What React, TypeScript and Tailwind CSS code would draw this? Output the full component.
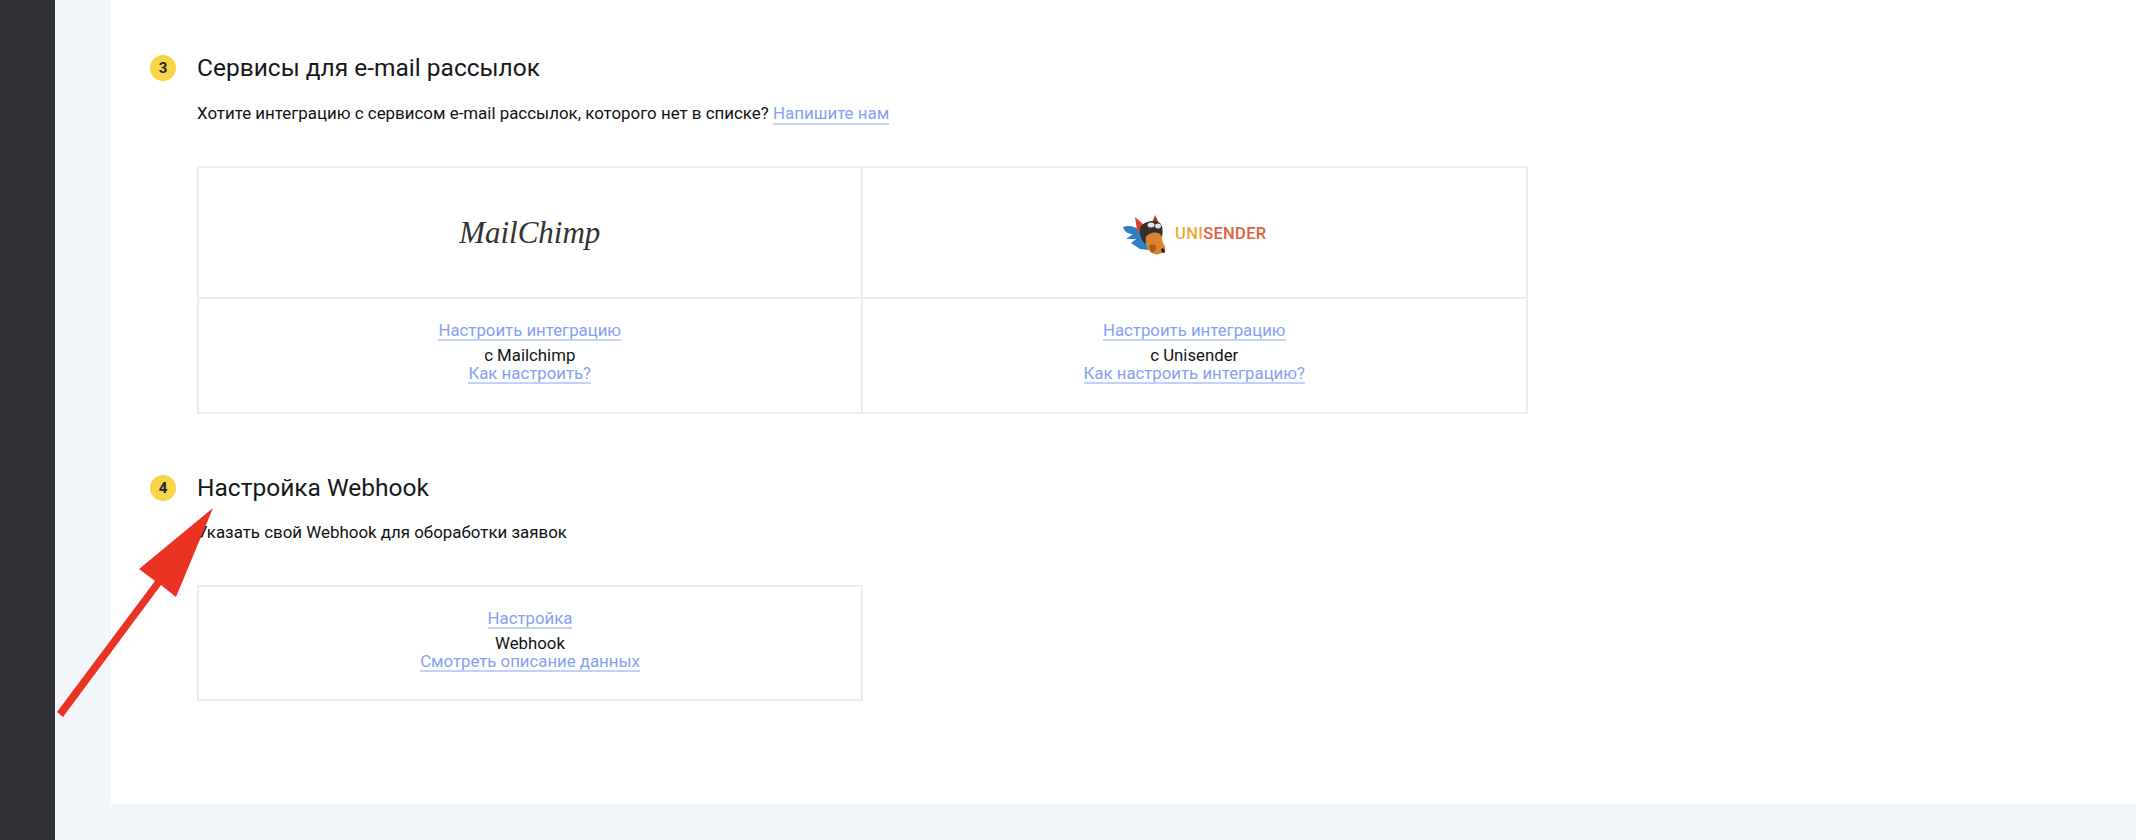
import React from "react";

const sans = "font-['Roboto',sans-serif]";
const link = "text-[#86a0f5] border-b-2 border-[#c3d0fb] leading-[17px]";

function Badge({ n }: { n: number }) {
  return (
    <div className="flex h-[26px] w-[26px] shrink-0 items-center justify-center rounded-full bg-[#f8d448] text-[15px] font-bold text-[#222]">
      {n}
    </div>
  );
}

function Heading({ n, title }: { n: number; title: string }) {
  return (
    <div className="flex items-center gap-[21px] pl-[150px]">
      <Badge n={n} />
      <h2 className="text-[24.5px] leading-[30px] text-[#17181a]">{title}</h2>
    </div>
  );
}

function LinkCell({
  top,
  middle,
  bottom,
}: {
  top: string;
  middle: string;
  bottom: string;
}) {
  return (
    <div className="flex flex-col items-center text-[16.8px]">
      <a className={link}>{top}</a>
      <span className="mt-[5px] leading-[19px] text-[#111]">{middle}</span>
      <a className={link}>{bottom}</a>
    </div>
  );
}

function UnisenderLogo() {
  return (
    <div className="flex items-center gap-[9px] pt-[4px]">
      <svg width="44" height="42" viewBox="0 0 44 42">
        {/* cape */}
        <path d="M1 13 C6 11 13 12 19 17 L27 36 L18 35 L9 29 L14 25 L4 25 L11 20 C7 20 3 19 1 13 Z" fill="#2f7fc4" />
        {/* ears */}
        <path d="M13 3 L20 9 L23 13 L20 21 L15 16 Z" fill="#d8412f" />
        <path d="M33 1 L37 9 L30 9 Z" fill="#b5352a" />
        {/* helmet */}
        <path d="M18 14 C21 7 33 5 38 9 C41 12 41 18 40 23 L27 22 L23 30 C19 26 17 19 18 14 Z" fill="#33302f" />
        {/* face */}
        <path d="M24 23 C27 18 36 17 39 21 L41 29 C44 33 44 36 41 38 C37 42 29 41 26 35 C24 31 23 27 24 23 Z" fill="#d9852f" />
        <path d="M27 32 C29 30 33 30 34 33 C34 37 31 39 29 38 Z" fill="#a85a22" />
        <path d="M40 34 C43 35 44 37 42 39 C40 39 38 37 40 34 Z" fill="#2b2422" />
        {/* goggles */}
        <ellipse cx="29" cy="11" rx="3.5" ry="2.5" fill="#e4e4e4" />
        <ellipse cx="36" cy="12" rx="3" ry="2.5" fill="#e4e4e4" />
      </svg>
      <span className="text-[16.5px] font-medium tracking-[0.3px] text-[#e2603a]">
        <span className="text-[#f0a83c]">UNI</span>SENDER
      </span>
    </div>
  );
}

export default function App() {
  return (
    <div className={`relative flex h-[840px] w-[2136px] overflow-hidden bg-[#f2f5fa] ${sans}`}>
      <aside className="w-[55px] shrink-0 bg-[#303238]" />
      <div className="ml-[56px] h-[804px] flex-1 bg-white" />
      <main className="absolute left-0 top-0 w-full">
        <div className="pt-[53px]">
          <Heading n={3} title="Сервисы для e-mail рассылок" />
          <p className="mt-[18px] pl-[197px] text-[16.9px] leading-[24px] text-[#111]">
            Хотите интеграцию с сервисом e-mail рассылок, которого нет в списке?{" "}
            <a className={link}>Напишите нам</a>
          </p>
          <div className="ml-[197px] mt-[41px] grid w-[1331px] grid-cols-2 border-2 border-[#e9ecf1]">
            <div className="flex h-[131px] items-center justify-center border-b-2 border-r-2 border-[#e9ecf1]">
              <span className="font-['Liberation_Serif',serif] text-[31px] italic leading-none text-[#333]">
                MailChimp
              </span>
            </div>
            <div className="flex h-[131px] items-center justify-center border-b-2 border-[#e9ecf1]">
              <UnisenderLogo />
            </div>
            <div className="flex h-[113px] items-start justify-center border-r-2 border-[#e9ecf1] pt-[23px]">
              <LinkCell top="Настроить интеграцию" middle="с Mailchimp" bottom="Как настроить?" />
            </div>
            <div className="flex h-[113px] items-start justify-center pt-[23px]">
              <LinkCell top="Настроить интеграцию" middle="с Unisender" bottom="Как настроить интеграцию?" />
            </div>
          </div>
        </div>
        <div className="mt-[59px]">
          <Heading n={4} title="Настройка Webhook" />
          <p className="mt-[17px] pl-[197px] text-[16.9px] leading-[24px] text-[#111]">
            {"Указать свой Webhook для \u043e\u0431\u043e\u0440\u0430\u0431\u043e\u0442\u043a\u0438 заявок"}
          </p>
          <div className="ml-[197px] mt-[41px] flex h-[116px] w-[666px] items-start justify-center border-2 border-[#e9ecf1] pt-[23px]">
            <LinkCell top="Настройка" middle="Webhook" bottom="Смотреть описание данных" />
          </div>
        </div>
      </main>
      {/* annotation arrow over the page */}
      <svg className="absolute left-0 top-0" width="300" height="840" viewBox="0 0 300 840">
        <path
          d="M213 508 L176 597 L161 585 L63 717 L57 712 L155 581 L139 569 Z"
          fill="#ea3323"
        />
      </svg>
    </div>
  );
}
